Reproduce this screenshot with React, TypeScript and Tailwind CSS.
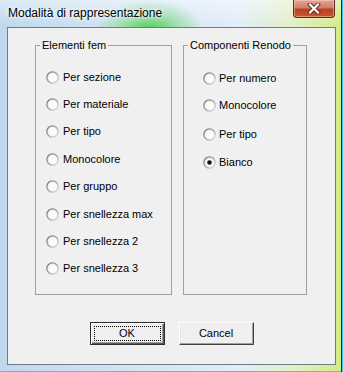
import React from "react";

function Radio({ checked }: { checked?: boolean }) {
  return (
    <svg width="13" height="13" viewBox="0 0 13 13" className="shrink-0">
      <defs>
        <linearGradient id="ring" x1="0" y1="0" x2="1" y2="1">
          <stop offset="0" stopColor="#6a6a6a" />
          <stop offset="0.55" stopColor="#a9a9a9" />
          <stop offset="1" stopColor="#ececec" />
        </linearGradient>
        <linearGradient id="fill" x1="0" y1="0" x2="1" y2="1">
          <stop offset="0" stopColor="#e2e2e2" />
          <stop offset="1" stopColor="#ffffff" />
        </linearGradient>
      </defs>
      <circle cx="6.5" cy="6.5" r="6.3" fill="url(#ring)" />
      <circle cx="6.5" cy="6.5" r="5" fill="url(#fill)" />
      <circle cx="6.5" cy="6.5" r="4" fill="#fbfbfb" />
      {checked && <circle cx="6.5" cy="6.5" r="2.3" fill="#111" />}
    </svg>
  );
}

function Row({ label, checked, h, gap }: { label: string; checked?: boolean; h: string; gap: string }) {
  return (
    <div className={`flex items-center whitespace-nowrap ${h} ${gap}`}>
      <Radio checked={checked} />
      <span>{label}</span>
    </div>
  );
}

const left = [
  { label: "Per sezione", h: "h-[27px]" },
  { label: "Per materiale", h: "h-[27px]" },
  { label: "Per tipo", h: "h-[27px]" },
  { label: "Monocolore", h: "h-[28px]" },
  { label: "Per gruppo", h: "h-[27px]" },
  { label: "Per snellezza max", h: "h-[28px]" },
  { label: "Per snellezza 2", h: "h-[27px]" },
  { label: "Per snellezza 3", h: "h-[27px]" },
];

const right = [
  { label: "Per numero", h: "h-[28px]" },
  { label: "Monocolore", h: "h-[27px]" },
  { label: "Per tipo", h: "h-[30px]" },
  { label: "Bianco", h: "h-[27px]", checked: true },
];

export default function App() {
  return (
    <div className="w-[343px] h-[372px] overflow-hidden flex flex-col bg-[radial-gradient(ellipse_55px_32px_at_150px_32px,rgba(60,205,60,0.95),rgba(110,215,110,0.5)_55%,transparent),linear-gradient(180deg,rgba(255,255,255,0.45)_0px,rgba(255,255,255,0)_24px),linear-gradient(90deg,#c0d8ee_0%,#cfe2f3_30%,#e2edf8_70%,#e2f0c4_86%,#d3ea84_100%)] shadow-[inset_-1px_0_0_#2fd0f0,inset_-2px_0_0_#243018,inset_0_-1px_0_#2fd0f0] font-['Liberation_Sans',Arial,sans-serif] text-black">
      <div className="h-[27px] shrink-0 flex items-start justify-between">
        <div className="pl-[8px] pt-[6px] text-[12px] leading-[15px] [text-shadow:0_0_6px_#ffffff,0_0_3px_#ffffff]">
          Modalità di rappresentazione
        </div>
        <div className="mr-[8px] w-[42px] h-[18px] rounded-b-[4px] border border-t-0 border-[#5b2a20] bg-[linear-gradient(180deg,#e0a894_0%,#d07e66_45%,#bd3f25_55%,#c8552f_100%)] shadow-[inset_0_0_0_1px_rgba(255,220,200,0.45)] flex items-center justify-center">
          <svg width="14" height="11" viewBox="0 0 14 11">
            <path d="M3 1.5 L11 9.5 M11 1.5 L3 9.5" stroke="#5a2418" strokeWidth="4" strokeLinecap="square" fill="none" />
            <path d="M3 1.5 L11 9.5 M11 1.5 L3 9.5" stroke="#ffffff" strokeWidth="2.2" strokeLinecap="square" fill="none" />
          </svg>
        </div>
      </div>
      <div className="ml-[7px] w-[329px] h-[338px] border border-[#6f7b88] bg-[#f0f0f0] text-[11px] leading-[13px] flex flex-col">
        <div className="flex pl-[27px] pt-[11px] gap-[11px]">
          <fieldset className="w-[137px] h-[256px] border border-[#a0a0a0]">
            <legend className="ml-[4px] px-[2px] whitespace-nowrap">Elementi fem</legend>
            <div className="pl-[10px] pt-[12px]">
              {left.map((r) => (
                <Row key={r.label} label={r.label} h={r.h} gap="gap-[4px]" />
              ))}
            </div>
          </fieldset>
          <fieldset className="w-[124px] h-[256px] border border-[#a0a0a0]">
            <legend className="ml-[4px] px-[2px] whitespace-nowrap">Componenti Renodo</legend>
            <div className="pl-[19px] pt-[12px]">
              {right.map((r) => (
                <Row key={r.label} label={r.label} h={r.h} checked={r.checked} gap="gap-[3px]" />
              ))}
            </div>
          </fieldset>
        </div>
        <div className="flex justify-center gap-[14px] mt-[27px]">
          <button className="relative w-[75px] h-[23px] border border-[#2e2e2e] bg-[#f0f0f0] shadow-[inset_1px_1px_0_#ffffff,inset_-1px_-1px_0_#5a5a5a,inset_-2px_-2px_0_#a0a0a0]">
            <span className="absolute inset-[3px] border border-dotted border-black" />
            OK
          </button>
          <button className="w-[75px] h-[23px] border border-t-white border-l-white border-b-[#404040] border-r-[#404040] bg-[#f0f0f0] shadow-[inset_-1px_-1px_0_#a0a0a0,inset_1px_1px_0_#e8e8e8]">
            Cancel
          </button>
        </div>
      </div>
    </div>
  );
}
